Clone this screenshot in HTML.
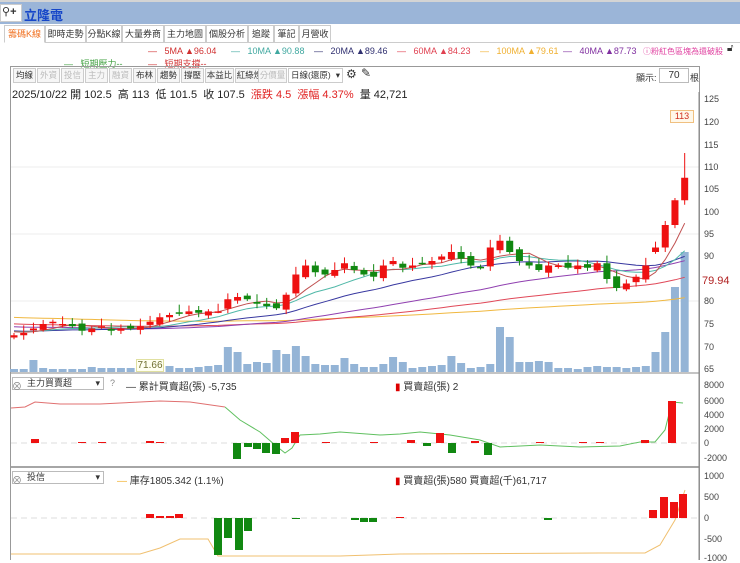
<!DOCTYPE html>
<html><head><meta charset="utf-8">
<style>
*{margin:0;padding:0;box-sizing:border-box}
body{width:740px;height:560px;overflow:hidden;background:#fff;font-family:"Liberation Sans","Noto Sans CJK TC",sans-serif;font-size:11px;color:#333;position:relative}
.abs{position:absolute;white-space:nowrap}
#top{left:0;top:0;width:740px;height:24px;background:#9bb5d8;border-top:2px solid #d4d4d4}
.tab{top:25px;height:18px;border:1px solid #ccc;background:#fff;font-size:9px;line-height:16px;text-align:center;color:#333;overflow:hidden}
.btn{top:68px;height:15px;border:1px solid #ccc;font-size:8.5px;line-height:13px;text-align:center;background:#f6f6f6;color:#333;overflow:hidden}
.dis{color:#bbb}
.lg{top:46px;font-size:9px}
.ax{font-size:9px;color:#444;left:704px}
</style></head><body>
<div class="abs" id="top"></div>
<div class="abs" style="left:0;top:4px;width:22px;height:18px;background:#fff;border:1px solid #ccc"></div>
<div class="abs" style="left:2px;top:5px;font-size:11px">⚲<b>+</b></div>
<div class="abs" style="left:24px;top:5px;font-size:13px;color:#1646c8;font-weight:bold">立隆電</div>
<div class="abs" style="left:4px;top:25px;height:18px;width:736px;border-bottom:1px solid #ccc"></div>
<div class="abs tab" style="left:4px;width:41px;color:#f07020;border-bottom-color:#fff">籌碼K線</div>
<div class="abs tab" style="left:45px;width:41px">即時走勢</div>
<div class="abs tab" style="left:86px;width:36px">分點K線</div>
<div class="abs tab" style="left:122px;width:42px">大量券商</div>
<div class="abs tab" style="left:164px;width:42px">主力地圖</div>
<div class="abs tab" style="left:206px;width:42px">個股分析</div>
<div class="abs tab" style="left:248px;width:26px">追蹤</div>
<div class="abs tab" style="left:274px;width:25px">筆記</div>
<div class="abs tab" style="left:299px;width:32px">月營收</div>
<div class="abs lg" style="left:148px;color:#d03030">— &nbsp;&nbsp;5MA ▲96.04</div>
<div class="abs lg" style="left:231px;color:#40a8a0">— &nbsp;&nbsp;10MA ▲90.88</div>
<div class="abs lg" style="left:314px;color:#303070">— &nbsp;&nbsp;20MA ▲89.46</div>
<div class="abs lg" style="left:397px;color:#e04050">— &nbsp;&nbsp;60MA ▲84.23</div>
<div class="abs lg" style="left:480px;color:#f0b030">— &nbsp;&nbsp;100MA ▲79.61</div>
<div class="abs lg" style="left:563px;color:#8030a0">— &nbsp;&nbsp;40MA ▲87.73</div>
<div class="abs" style="top:46px;left:643px;font-size:8px;color:#e040a0">ⓘ粉紅色區塊為還破股</div>
<div class="abs" style="top:43px;left:727px;font-size:10px">🔓︎</div>
<div class="abs" style="top:57px;left:64px;font-size:9px;color:#40a040">— &nbsp;&nbsp;短期壓力--</div>
<div class="abs" style="top:57px;left:148px;font-size:9px;color:#d03030">— &nbsp;&nbsp;短期支撐--</div>
<div class="abs" style="left:10px;top:66px;width:690px;height:494px;border:1px solid #999;border-bottom:none"></div>
<div class="abs btn" style="left:13px;width:23px">均線</div>
<div class="abs btn dis" style="left:37px;width:23px">外資</div>
<div class="abs btn dis" style="left:61px;width:23px">投信</div>
<div class="abs btn dis" style="left:85px;width:23px">主力</div>
<div class="abs btn dis" style="left:109px;width:23px">融資</div>
<div class="abs btn" style="left:133px;width:23px">布林</div>
<div class="abs btn" style="left:157px;width:23px">趨勢</div>
<div class="abs btn" style="left:181px;width:23px">撐壓</div>
<div class="abs btn" style="left:205px;width:29px">本益比</div>
<div class="abs btn" style="left:235px;width:29px">紅綠燈</div>
<div class="abs btn dis" style="left:258px;width:29px">分價量</div>
<div class="abs btn" style="left:288px;width:55px;background:#fff;text-align:left;padding-left:2px">日線(還原)<span style="float:right;padding-right:2px">▾</span></div>
<div class="abs" style="left:346px;top:67px;font-size:12px">⚙</div>
<div class="abs" style="left:361px;top:66px;font-size:12px">✎</div>
<div class="abs" style="left:636px;top:71px;font-size:9px">顯示:</div>
<div class="abs" style="left:659px;top:68px;width:30px;height:15px;border:1px solid #bbb;font-size:10px;text-align:center;line-height:13px">70</div>
<div class="abs" style="left:690px;top:71px;font-size:9px">根</div>
<div class="abs" style="left:12px;top:86px;font-size:11px;color:#222">2025/10/22 開 102.5 &nbsp;高 113 &nbsp;低 101.5 &nbsp;收 107.5 &nbsp;<span style="color:#e02020">漲跌 4.5 &nbsp;漲幅 4.37%</span> &nbsp;量 42,721</div>
<svg class="abs" style="left:0;top:0" width="740" height="560" id="sv"></svg>
<div class="abs" style="left:12px;top:377px;width:92px;height:13px;border:1px solid #bbb;font-size:9px;line-height:11px;padding-left:14px;background:#fff">主力買賣超<span style="float:right;padding-right:3px">▾</span></div>
<div class="abs" style="left:12px;top:378px;font-size:10px;color:#888">⊗</div>
<div class="abs" style="left:110px;top:378px;font-size:9px;color:#888">?</div>
<div class="abs" style="left:126px;top:378px;font-size:10px">— 累計買賣超(張) -5,735</div>
<div class="abs" style="left:395px;top:378px;font-size:10px"><span style="color:#d00">▮</span> 買賣超(張) 2</div>
<div class="abs" style="left:12px;top:471px;width:92px;height:13px;border:1px solid #bbb;font-size:9px;line-height:11px;padding-left:14px;background:#fff">投信<span style="float:right;padding-right:3px">▾</span></div>
<div class="abs" style="left:12px;top:472px;font-size:10px;color:#888">⊗</div>
<div class="abs" style="left:117px;top:472px;font-size:10px"><span style="color:#f0b030">—</span> 庫存1805.342 (1.1%)</div>
<div class="abs" style="left:395px;top:472px;font-size:10px"><span style="color:#d00">▮</span> 買賣超(張)580 買賣超(千)61,717</div>
<div class="abs ax" style="top:94px">125</div><div class="abs ax" style="top:117px">120</div><div class="abs ax" style="top:140px">115</div><div class="abs ax" style="top:162px">110</div><div class="abs ax" style="top:184px">105</div><div class="abs ax" style="top:207px">100</div><div class="abs ax" style="top:229px">95</div><div class="abs ax" style="top:251px">90</div><div class="abs ax" style="top:296px">80</div><div class="abs ax" style="top:319px">75</div><div class="abs ax" style="top:342px">70</div><div class="abs ax" style="top:364px">65</div>
<div class="abs" style="left:702px;top:275px;font-size:11px;color:#b02020">79.94</div>
<div class="abs" style="left:670px;top:110px;width:24px;height:13px;border:1px solid #f0c080;background:#fff8ea;font-size:9px;color:#d03020;text-align:center;line-height:11px">113</div>
<div class="abs" style="left:136px;top:359px;width:28px;height:13px;border:1px solid #e0e0a0;background:#fffff0;font-size:10px;color:#707030;text-align:center;line-height:11px">71.66</div>
<div class="abs ax" style="top:380px">8000</div><div class="abs ax" style="top:396px">6000</div><div class="abs ax" style="top:410px">4000</div><div class="abs ax" style="top:424px">2000</div><div class="abs ax" style="top:438px">0</div><div class="abs ax" style="top:453px">-2000</div>
<div class="abs ax" style="top:471px">1000</div><div class="abs ax" style="top:492px">500</div><div class="abs ax" style="top:513px">0</div><div class="abs ax" style="top:534px">-500</div><div class="abs ax" style="top:553px">-1000</div>
<script>
var C=[72.5,73,74,75,75.5,75,74.5,73.5,74,74.5,73.5,74,74,74.5,75.5,76.5,77,77.5,77.8,77.5,77.8,77.8,80.5,81,80.5,79.5,79,78.5,81.5,86,88,86.5,86,87,88.5,87,86,85.5,88,89,87.5,88,88.5,89,90,91,89.5,88,87.5,92,93.5,91,89,88,87,88,88,87.5,88,87.5,88.5,85,83,84,85.5,88,92,97,102.5,107.5];
var svg=document.getElementById('sv'),h='';
function Y(p){return 99+(125-p)*4.5}
function X(i){return 14+i*9.72}
[167,234,301].forEach(function(y){h+='<line x1="11" x2="699" y1="'+y+'" y2="'+y+'" stroke="#eee"/>'});
h+='<line x1="699" x2="699" y1="92" y2="560" stroke="#888"/>';
h+='<line x1="11" x2="699" y1="373" y2="373" stroke="#888"/><line x1="11" x2="699" y1="467" y2="467" stroke="#888" stroke-width="1.5"/>';
var V=[3,3,12,4,3,3,3,3,5,4,4,4,4,12,4,5,6,4,4,5,6,7,25,20,8,10,9,22,18,26,16,8,7,7,14,8,5,5,8,15,10,4,5,6,7,16,9,4,5,8,45,35,10,10,11,10,4,4,3,5,6,5,5,4,5,6,20,40,85,120];
for(var i=0;i<70;i++){var v=V[i];h+='<rect x="'+(X(i)-4)+'" y="'+(372-v)+'" width="8" height="'+v+'" fill="#94b4d6"/>';}
var P=[];for(var k=0;k<100;k++)P.push(80-k*0.07+Math.sin(k/5)*0.5);var A=P.concat(C);
function ma(n,col){var d='';for(var i=0;i<70;i++){var s=0;for(var j=0;j<n;j++)s+=A[100+i-j];d+=(i?'L':'M')+X(i).toFixed(1)+' '+Y(s/n).toFixed(1);}h+='<path d="'+d+'" fill="none" stroke="'+col+'" stroke-width="1"/>';}
ma(100,'#f0b840');ma(60,'#e04858');ma(40,'#9040b0');ma(20,'#3838a0');ma(10,'#50b8a8');ma(5,'#c05050');
for(var i=0;i<70;i++){var c=C[i],o=i?C[i-1]+(((i*7)%5)-2)*0.3:72;if(i>=66){o=[91,92,97,102.5][i-66];}
var hi=Math.max(o,c)+0.5+((i*3)%4)*0.4,lo=Math.min(o,c)-0.4-((i*5)%3)*0.3;if(i==69){hi=113;lo=101.5;o=102.5;}
var up=c>=o,col=up?'#ee1111':'#118811';var y1=Y(Math.max(o,c)),y2=Y(Math.min(o,c));if(y2-y1<1.5)y2=y1+1.5;
h+='<line x1="'+X(i)+'" x2="'+X(i)+'" y1="'+Y(hi)+'" y2="'+Y(lo)+'" stroke="'+col+'"/><rect x="'+(X(i)-3.5)+'" y="'+y1+'" width="7" height="'+(y2-y1)+'" fill="'+col+'"/>';}
h+='<line x1="11" x2="699" y1="443" y2="443" stroke="#ddd" stroke-dasharray="6 4"/>';
h+='<path d="M11 408L25 407L35 402L60 404L100 404L140 402L160 401L190 402L225 407" fill="none" stroke="#e07070"/>';
h+='<path d="M225 407L240 420L260 432L275 445L285 453L292 448L300 435L320 434L340 432L380 435L400 434L420 432L450 435L480 440L500 447L540 445L580 447L620 446L640 442L655 442L665 430L672 402L683 403" fill="none" stroke="#60c060"/>';
var B1=[[35,-4],[82,-1],[102,-1],[150,-2],[160,-1],[237,16],[248,4],[257,6],[266,10],[276,11],[285,-5],[295,-11],[326,-1],[374,-1],[411,-3],[427,3],[440,-10],[452,10],[475,-2],[488,12],[540,-1],[583,-1],[600,-1],[645,-3],[672,-42]];
B1.forEach(function(b){var v=b[1];h+='<rect x="'+(b[0]-4)+'" y="'+(v<0?443+v:443)+'" width="8" height="'+Math.abs(v)+'" fill="'+(v<0?'#ee1111':'#118811')+'"/>'});
h+='<line x1="11" x2="699" y1="518" y2="518" stroke="#ddd" stroke-dasharray="6 4"/>';
h+='<path d="M11 554L140 554L160 548L180 539L208 539L218 556L340 556L400 554L600 553L645 553L660 545L675 520L685 490" fill="none" stroke="#f0c070"/>';
var B2=[[150,-4],[160,-2],[170,-2],[179,-4],[218,37],[228,20],[239,32],[248,13],[296,1],[355,2],[364,4],[373,4],[400,-1],[548,2],[653,-8],[664,-21],[674,-16],[683,-24]];
B2.forEach(function(b){var v=b[1];h+='<rect x="'+(b[0]-4)+'" y="'+(v<0?518+v:518)+'" width="8" height="'+Math.max(1,Math.abs(v))+'" fill="'+(v<0?'#ee1111':'#118811')+'"/>'});
svg.innerHTML=h;
</script>
</body></html>
